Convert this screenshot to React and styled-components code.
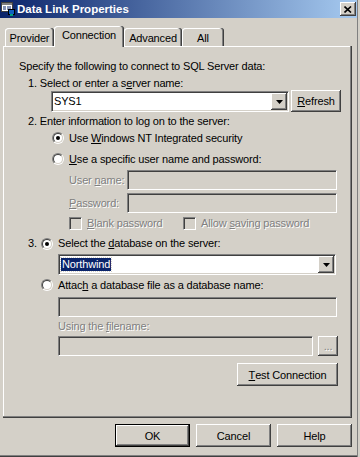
import styled, { createGlobalStyle } from 'styled-components';

const GlobalStyle = createGlobalStyle`
  html, body { margin: 0; padding: 0; background: #d4d0c8; }
  body { font-family: "Liberation Sans", Arial, sans-serif; font-size: 11px; color: #000; }
  * { box-sizing: border-box; }
`;

const sunken = `
  border: 1px solid;
  border-color: #808080 #fff #fff #808080;
  box-shadow: inset 1px 1px 0 #404040, inset -1px -1px 0 #d4d0c8;
`;

const raised = `
  box-shadow: inset -1px -1px 0 #404040, inset 1px 1px 0 #fff, inset -2px -2px 0 #808080;
`;

const Window = styled.div`
	position: relative;
	width: 360px;
	height: 457px;
	overflow: hidden;
	background: #d4d0c8;
	letter-spacing: -0.15px;
	box-shadow: inset -2px 0 0 #d4d0c8, inset -3px 0 0 #808080, inset 0 -1px 0 #404040,
		inset 0 -2px 0 #808080;
`;

const TitleBar = styled.div`
	display: flex;
	align-items: center;
	width: 357px;
	height: 18px;
	padding: 0 1px;
	background: linear-gradient(to right, #0a246a, #a6caf0);
`;

const TitleText = styled.div`
	flex: 1;
	margin-left: 2px;
	color: #fff;
	font-weight: bold;
	font-size: 11.5px;
	letter-spacing: 0;
	white-space: nowrap;
`;

const CloseButton = styled.div`
	display: flex;
	align-items: center;
	justify-content: center;
	width: 16px;
	height: 14px;
	background: #d4d0c8;
	${raised}
`;

const TabStrip = styled.div`
	display: flex;
	align-items: flex-end;
	height: 20px;
	margin-top: 8px;
	padding-left: 5px;
`;

const Tab = styled.div`
	position: relative;
	z-index: ${p => (p.$active ? 2 : 1)};
	width: ${p => p.$w}px;
	height: ${p => (p.$active ? 21 : 18)}px;
	margin-bottom: ${p => (p.$active ? -1 : 0)}px;
	padding-top: ${p => (p.$active ? 3 : 4)}px;
	line-height: 13px;
	text-align: center;
	background: #d4d0c8;
	border-radius: 3px 3px 0 0;
	box-shadow: inset -1px 0 0 #404040, inset -2px 0 0 #808080, inset 1px 1px 0 #fff;
`;

const Panel = styled.div`
	display: flex;
	flex-direction: column;
	width: 349px;
	height: 372px;
	margin-left: 3px;
	padding: 14px 0 0 16px;
	box-shadow: inset -1px -1px 0 #404040, inset -2px -2px 0 #808080, inset 1px 1px 0 #fff;
`;

const Text = styled.div`
	height: 13px;
	line-height: 13px;
	white-space: nowrap;
	margin-top: ${p => p.$mt || 0}px;
	margin-left: ${p => p.$ml || 0}px;
	width: ${p => (p.$w ? `${p.$w}px` : 'auto')};
	flex-shrink: 0;
	color: ${p => (p.$disabled ? '#808080' : '#000')};
	text-shadow: ${p => (p.$disabled ? '1px 1px 0 #fff' : 'none')};
`;

const Row = styled.div`
	display: flex;
	align-items: ${p => p.$align || 'center'};
	gap: ${p => p.$gap || 0}px;
	height: ${p => p.$h || 13}px;
	margin-top: ${p => p.$mt || 0}px;
	margin-left: ${p => p.$ml || 0}px;
`;

const Radio = styled.span`
	position: relative;
	flex-shrink: 0;
	width: 12px;
	height: 12px;
	border-radius: 50%;
	border: 1px solid;
	border-color: #808080 #fff #fff #808080;
	&::before {
		content: '';
		position: absolute;
		inset: 0;
		border-radius: 50%;
		border: 1px solid;
		border-color: #404040 #d4d0c8 #d4d0c8 #404040;
		background: #fff;
	}
	&::after {
		content: '';
		display: ${p => (p.$checked ? 'block' : 'none')};
		position: absolute;
		left: 3px;
		top: 3px;
		width: 4px;
		height: 4px;
		border-radius: 50%;
		background: #000;
	}
`;

const Check = styled.span`
	flex-shrink: 0;
	width: 13px;
	height: 13px;
	background: #d4d0c8;
	${sunken}
`;

const CheckGroup = styled.div`
	display: flex;
	align-items: center;
	gap: 5px;
	width: ${p => p.$w}px;
`;

const Field = styled.div`
	flex-shrink: 0;
	width: ${p => p.$w}px;
	height: 20px;
	margin-top: ${p => p.$mt || 0}px;
	margin-left: ${p => p.$ml || 0}px;
	background: ${p => (p.$disabled ? '#d4d0c8' : '#fff')};
	${sunken}
`;

const Combo = styled.div`
	display: flex;
	flex-shrink: 0;
	width: ${p => p.$w}px;
	height: 21px;
	margin-top: ${p => p.$mt || 0}px;
	margin-left: ${p => p.$ml || 0}px;
	padding: 1px;
	background: #fff;
	${sunken}
`;

const ComboText = styled.div`
	flex: 1;
	padding: 2px 1px 0;
	line-height: 13px;
`;

const Selected = styled.span`
	display: inline-block;
	padding: 0 1px;
	background: #0a246a;
	color: #fff;
	outline: 1px dotted #d4d0c8;
`;

const DropButton = styled.div`
	display: flex;
	align-items: center;
	justify-content: center;
	width: 16px;
	background: #d4d0c8;
	${raised}
`;

const Button = styled.div`
	display: flex;
	align-items: center;
	justify-content: center;
	flex-shrink: 0;
	width: ${p => p.$w}px;
	height: ${p => p.$h || 23}px;
	margin-top: ${p => p.$mt || 0}px;
	margin-left: ${p => p.$ml || 0}px;
	background: #d4d0c8;
	white-space: nowrap;
	color: ${p => (p.$disabled ? '#808080' : '#000')};
	text-shadow: ${p => (p.$disabled ? '1px 1px 0 #fff' : 'none')};
	box-shadow: ${p =>
		p.$default
			? 'inset 0 0 0 1px #000, inset -2px -2px 0 #404040, inset 2px 2px 0 #fff, inset -3px -3px 0 #808080'
			: 'inset -1px -1px 0 #404040, inset 1px 1px 0 #fff, inset -2px -2px 0 #808080'};
`;

const ButtonRow = styled.div`
	display: flex;
	justify-content: flex-end;
	gap: 6px;
	margin-top: 6px;
	padding-right: 8px;
`;

const Arrow = () => (
	<svg width="7" height="4" viewBox="0 0 7 4">
		<path d="M0 0h7L3.5 4z" fill="#000" />
	</svg>
);

const AppIcon = () => (
	<svg width="14" height="14" viewBox="0 0 14 14">
		<rect x="0.5" y="0.5" width="11" height="9" fill="#fff" stroke="#404040" />
		<rect x="1" y="1" width="10" height="2" fill="#808080" />
		<path d="M2 5h3M6 5h4M2 7h3M6 7h4" stroke="#0a246a" />
		<rect x="7.5" y="7.5" width="6" height="5" fill="#1060c0" stroke="#000" />
		<rect x="9" y="12" width="3" height="2" fill="#00a080" />
	</svg>
);

const CloseGlyph = () => (
	<svg width="8" height="7" viewBox="0 0 8 7">
		<path d="M0.5 0.5L7 6.5M7 0.5L0.5 6.5" stroke="#000" strokeWidth="1.6" />
	</svg>
);

const App = () => {
	return (
		<Window>
			<GlobalStyle />
			<TitleBar>
				<AppIcon />
				<TitleText>Data Link Properties</TitleText>
				<CloseButton>
					<CloseGlyph />
				</CloseButton>
			</TitleBar>

			<TabStrip>
				<Tab $w={49}>Provider</Tab>
				<Tab $w={70} $active>
					Connection
				</Tab>
				<Tab $w={58}>Advanced</Tab>
				<Tab $w={42}>All</Tab>
			</TabStrip>

			<Panel>
				<Text>Specify the following to connect to SQL Server data:</Text>
				<Text $mt={4} $ml={9}>
					1. Select or enter a s<u>e</u>rver name:
				</Text>
				<Row $h={22} $ml={32} $gap={2} $align="flex-start">
					<Combo $w={238} $mt={1}>
						<ComboText>SYS1</ComboText>
						<DropButton>
							<Arrow />
						</DropButton>
					</Combo>
					<Button $w={50} $h={22}>
						<u>R</u>efresh
					</Button>
				</Row>
				<Text $mt={3} $ml={9}>
					2. Enter information to log on to the server:
				</Text>
				<Row $mt={3} $ml={33} $gap={5}>
					<Radio $checked />
					<span>
						Use <u>W</u>indows NT Integrated security
					</span>
				</Row>
				<Row $mt={8} $ml={33} $gap={5}>
					<Radio />
					<span>
						<u>U</u>se a specific user name and password:
					</span>
				</Row>
				<Row $h={20} $mt={5} $ml={50}>
					<Text $w={58} $disabled>
						User <u>n</u>ame:
					</Text>
					<Field $w={210} $disabled />
				</Row>
				<Row $h={20} $mt={3} $ml={50}>
					<Text $w={58} $disabled>
						<u>P</u>assword:
					</Text>
					<Field $w={210} $disabled />
				</Row>
				<Row $mt={4} $ml={50}>
					<CheckGroup $w={114}>
						<Check />
						<Text $disabled>
							<u>B</u>lank password
						</Text>
					</CheckGroup>
					<CheckGroup $w={160}>
						<Check />
						<Text $disabled>
							Allow <u>s</u>aving password
						</Text>
					</CheckGroup>
				</Row>
				<Row $mt={7} $ml={9}>
					<Text $w={13}>3.</Text>
					<Radio $checked />
					<Text $ml={5}>
						Select the <u>d</u>atabase on the server:
					</Text>
				</Row>
				<Combo $w={278} $mt={4} $ml={39}>
					<ComboText>
						<Selected>Northwind</Selected>
					</ComboText>
					<DropButton>
						<Arrow />
					</DropButton>
				</Combo>
				<Row $mt={3} $ml={22} $gap={5}>
					<Radio />
					<span>
						Attac<u>h</u> a database file as a database name:
					</span>
				</Row>
				<Field $w={279} $mt={6} $ml={39} $disabled />
				<Text $mt={3} $ml={39} $disabled>
					Using the <u>f</u>ilename:
				</Text>
				<Row $h={20} $mt={3} $ml={39} $gap={5}>
					<Field $w={255} $disabled />
					<Button $w={20} $h={20} $disabled>
						...
					</Button>
				</Row>
				<Button $w={101} $h={23} $mt={7} $ml={218}>
					<u>T</u>est Connection
				</Button>
			</Panel>

			<ButtonRow>
				<Button $w={75} $default>
					OK
				</Button>
				<Button $w={75}>Cancel</Button>
				<Button $w={75}>Help</Button>
			</ButtonRow>
		</Window>
	);
};

export default App;
